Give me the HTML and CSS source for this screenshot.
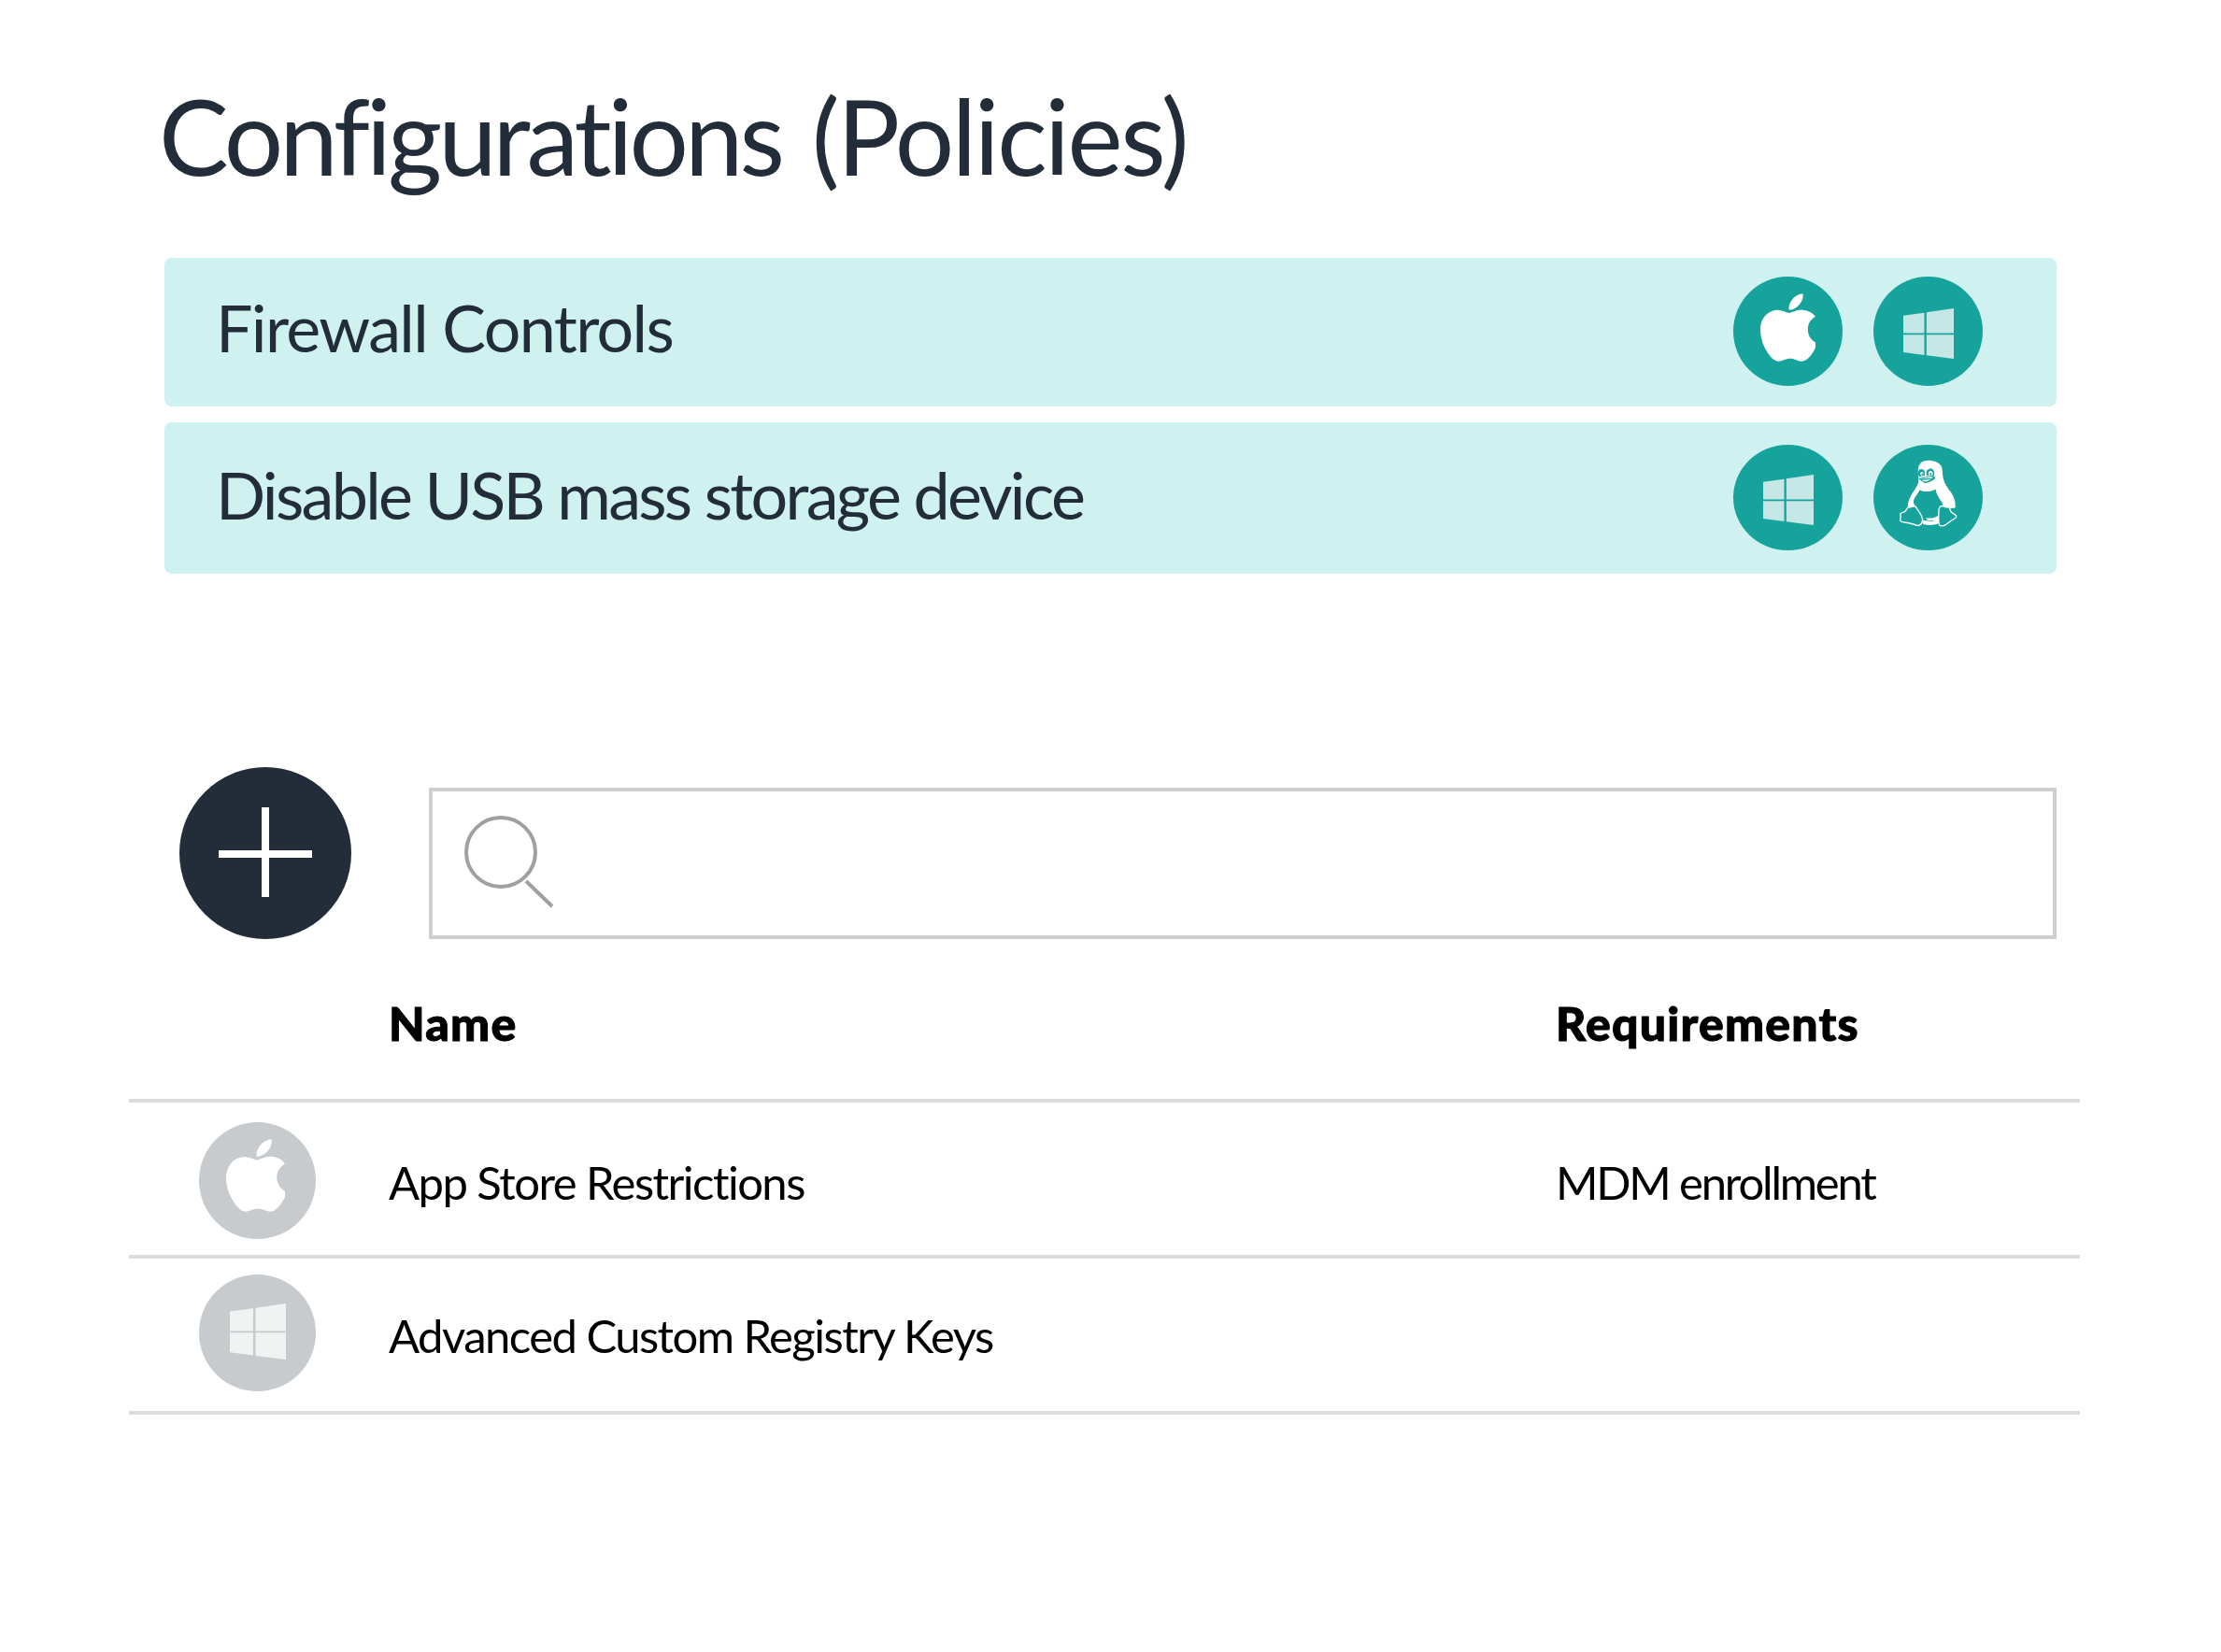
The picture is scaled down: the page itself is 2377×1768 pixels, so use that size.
FILE: index.html
```html
<!DOCTYPE html>
<html>
    <head>
        <meta charset="utf-8">
        <title>Configurations (Policies)</title>
        <link rel="stylesheet" href="styles.css">
    </head>
    <body>
        <svg class="defs" width="0" height="0">
            <symbol id="apple" viewBox="4 32 365 448">
                <path d="M318.7 268.7c-.2-36.7 16.4-64.4 50-84.8-18.8-26.9-47.2-41.7-84.7-44.6-35.5-2.8-74.3 20.7-88.5 20.7-15 0-49.4-19.7-76.4-19.7C63.3 141.2 4 184.8 4 273.5q0 39.3 14.4 81.2c12.8 36.7 59 126.7 107.2 125.2 25.2-.6 43-17.9 75.8-17.9 31.8 0 48.3 17.9 76.4 17.9 48.6-.7 90.4-82.5 102.6-119.3-65.2-30.7-61.7-90-61.7-91.9zm-56.6-164.2c27.3-32.4 24.8-61.9 24-72.5-24.1 1.4-52 16.4-67.9 34.9-17.5 19.8-27.8 44.3-25.6 71.9 26.1 2 49.9-11.4 69.5-34.3z"/>
            </symbol>
            <symbol id="windows" viewBox="0 0 161 161">
                <path d="M0 23 67 14V79H0ZM74 13 161 0V79H74ZM0 84H67V149L0 140ZM74 84H161V161L74 150Z"/>
            </symbol>
            <symbol id="tux" viewBox="0 0 188 215">
                <path fill="#fff" d="M94 2C74 2 62 14 62 34c0 16 2 28 1 38-2 14-16 28-24 44-6 10-10 22-10 34l32 4 32 40h36l28-38 24-2c2-18-4-36-14-50-10-14-20-26-24-42-4-18-2-28-6-40C132 10 114 2 94 2Z"/>
                <path fill="#16a39c" d="M68 96c10 8 34 8 50-2 2 16 12 30 20 42 4 8 4 14 2 20-6 4-10 10-10 20-14 12-40 14-54 6-2-12-8-22-18-30-8-6-12-14-10-22 4-14 14-22 20-34Z"/>
                <path fill="#16a39c" d="M62 46c-1-9 4-16 11-16s11 7 11 14c0 3-1 6-2 8-5-1-10 0-14 3-3-2-5-5-6-9ZM88 44c0-9 6-16 14-16s12 8 12 16c0 5-2 9-5 12-6-4-12-6-19-5-1-2-2-4-2-7Z"/>
                <path fill="#fff" d="M69 45a5 6 0 1 0 10 0 5 6 0 1 0-10 0ZM95 44a7 8 0 1 0 14 0 7 8 0 1 0-14 0Z"/>
                <path fill="#16a39c" d="M73 47a2.500 3 0 1 0 5 0 2.500 3 0 1 0-5 0ZM99 46a3 3.500 0 1 0 6 0 3 3.500 0 1 0-6 0Z"/>
                <path fill="#16a39c" d="M64 60c8-2 22-5 34-8 10-2 16 0 18 4 2 4 0 6-6 9-8 5-16 8-22 10-6 0-12-4-16-8-4-3-9-5-8-7Z"/>
                <path fill="#fff" d="M68 62c8-2 20-5 30-7 8-1 12 1 12 3-10 0-26 3-42 4Zm6 4c10-1 22-3 30-5-6 5-14 8-20 9-4 0-7-2-10-4Z"/>
                <path fill="#16a39c" stroke="#fff" stroke-width="4" stroke-linejoin="round" d="M30 152c8 2 18-6 24-2 6 8 10 16 16 24 6 10 8 20 4 28-4 8-10 9-16 8-14-6-30-8-48-12-6-2-6-6-4-10 2-6-2-12 0-16 4-4 12-4 16-8 2-4 4-8 8-12Z"/>
                <path fill="#16a39c" stroke="#fff" stroke-width="4" stroke-linejoin="round" d="M128 166c0-8 2-16 8-18 8-2 12 6 20 4 6-2 8 2 8 8 2 8 8 10 14 14 6 4 8 8 4 12-10 6-22 14-32 22-6 4-16 6-20 0-4-8-2-20-2-42Z"/>
                <path fill="#fff" d="M128 190c-16 8-36 8-52 2l2 14c16 4 34 4 50-2Z"/>
            </symbol>
        </svg>

        <div class="page">
            <h1 class="title">Configurations <span class="title-paren">(Policies)</span></h1>

            <div class="banner banner-first">
                <span class="banner-name firewall">Firewall Controls</span>
                <div class="os-list">
                    <span class="os teal"><svg class="ico-apple"><use href="#apple"/></svg></span>
                    <span class="os teal"><svg class="ico-win"><use href="#windows"/></svg></span>
                </div>
            </div>
            <div class="banner banner-second">
                <span class="banner-name usb">Disable USB mass storage device</span>
                <div class="os-list">
                    <span class="os teal"><svg class="ico-win"><use href="#windows"/></svg></span>
                    <span class="os teal"><svg class="ico-tux"><use href="#tux"/></svg></span>
                </div>
            </div>

            <div class="toolbar">
                <button class="add" aria-label="Add">
                    <svg width="100" height="98" viewBox="0 0 100 98"><path d="M0 46h100v8H0zM46 0h8v96h-8z" fill="#fff"/></svg>
                </button>
                <div class="search">
                    <svg width="96" height="99" viewBox="0 0 96 99" fill="none" stroke="#a0a0a0" stroke-width="4">
                        <circle cx="39" cy="39" r="37"/>
                        <path d="M66 70 94 97"/>
                    </svg>
                </div>
            </div>
        </div>

        <div class="table">
            <div class="row head">
                <span></span>
                <span>Name</span>
                <span>Requirements</span>
            </div>
            <div class="row row-app">
                <span class="os gray"><svg class="ico-apple"><use href="#apple"/></svg></span>
                <span class="cell">App Store Restrictions</span>
                <span class="cell req">MDM enrollment</span>
            </div>
            <div class="row row-adv">
                <span class="os gray"><svg class="ico-win"><use href="#windows"/></svg></span>
                <span class="cell">Advanced Custom Registry Keys</span>
                <span></span>
            </div>
        </div>
    </body>
</html>
```

FILE: styles.css
```css
body {
    margin: 0;
    background-color: white;
    font-family: Lato, "Open Sans", sans-serif;
}

.defs {
    display: block;
    height: 0;
}

.page {
    width: 2025px;
    margin-left: 176px;
}

.title {
    box-sizing: border-box;
    height: 276px;
    margin: 0 0 0 -6px;
    padding-top: 95px;
    font-size: 112px;
    font-weight: 400;
    line-height: 100px;
    letter-spacing: -4px;
    word-spacing: 8px;
    white-space: nowrap;
    color: #222d39;
}

.title-paren {
    letter-spacing: -2.5px;
}

.banner {
    display: flex;
    align-items: center;
    justify-content: space-between;
    padding-left: 55px;
    padding-right: 79px;
    background-color: #cff1f0;
    border-radius: 8px;
}

.banner-first {
    height: 159px;
    margin-bottom: 17px;
}

.banner-second {
    height: 162px;
}

.banner-second .teal {
    height: 113px;
}

.banner-name {
    padding-bottom: 12px;
    font-size: 70px;
    color: #222d39;
    white-space: nowrap;
}

.firewall {
    letter-spacing: -1.65px;
}

.usb {
    padding-bottom: 9px;
    letter-spacing: -2.7px;
}

.os-list {
    display: flex;
    gap: 33px;
    padding-bottom: 2px;
}

.os {
    display: flex;
    align-items: center;
    justify-content: center;
    border-radius: 50%;
    fill: white;
}

.teal {
    width: 117px;
    height: 117px;
    background-color: #16a39c;
}

.gray {
    width: 125px;
    height: 125px;
    background-color: #c7cbce;
}

.ico-apple {
    width: 59px;
    height: 75px;
    margin-bottom: 8px;
}

.ico-win {
    width: 54px;
    height: 54px;
    margin-top: 5px;
    fill: #c5e8e6;
}

.ico-tux {
    width: 63px;
    height: 72px;
    margin-bottom: 8px;
}

.gray .ico-apple {
    width: 63px;
    height: 80px;
    margin-right: 4px;
    margin-bottom: 12px;
}

.gray .ico-win {
    width: 60px;
    height: 60px;
    margin-top: 0;
    margin-bottom: 4px;
    fill: #f1f3f3;
}

.toolbar {
    display: flex;
    align-items: flex-end;
    margin-top: 207px;
    margin-left: 16px;
}

.add {
    display: flex;
    align-items: center;
    justify-content: center;
    flex: 0 0 184px;
    height: 184px;
    padding: 0;
    border: none;
    border-radius: 50%;
    background-color: #222d39;
}

.search {
    flex: 1;
    box-sizing: border-box;
    height: 162px;
    margin-left: 83px;
    padding-left: 34px;
    padding-top: 26px;
    border: 4px solid #cfcfcf;
}

.table {
    width: 2088px;
    margin-left: 138px;
}

.row {
    display: grid;
    grid-template-columns: 278px 1249px 1fr;
    align-items: center;
    box-sizing: content-box;
    height: 163px;
    border-bottom: 4px solid #dcdcdc;
    font-size: 49px;
    letter-spacing: -1.55px;
    color: black;
}

.row .os {
    margin-left: 75px;
}

.head {
    box-sizing: border-box;
    height: 175px;
    padding-top: 8px;
    font-size: 50px;
    font-weight: 900;
    letter-spacing: 1.2px;
    -webkit-text-stroke: 1px black;
}

.row-app .os {
    margin-top: 4px;
}

.row-app .cell {
    padding-top: 7px;
}

.row-adv .os {
    margin-bottom: 4px;
}

.req {
    letter-spacing: -2.2px;
}
```
